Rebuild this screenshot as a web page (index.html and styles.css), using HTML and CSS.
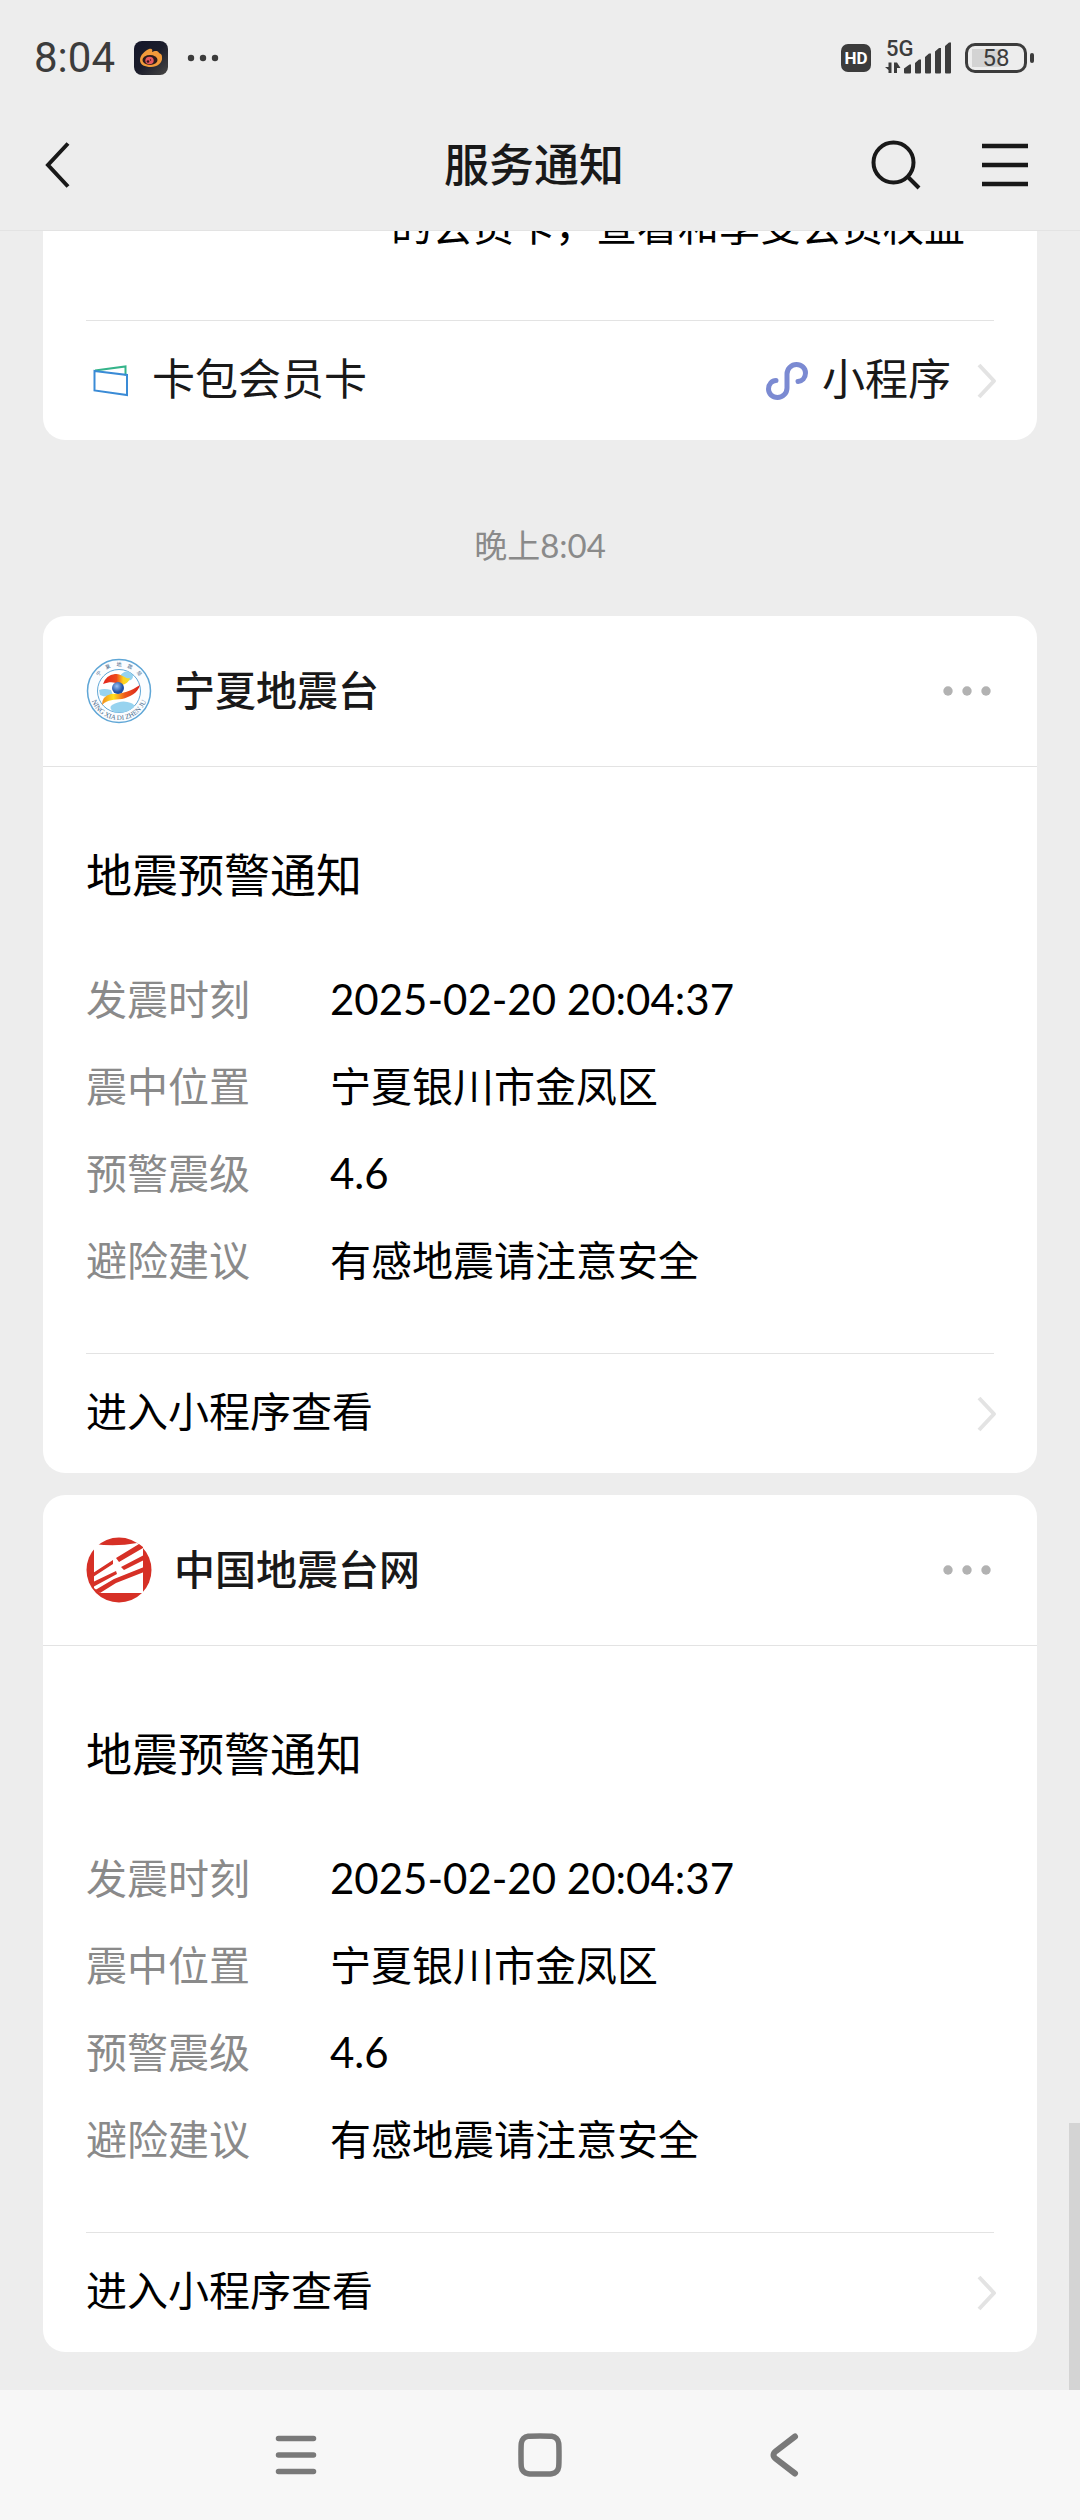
FILE: index.html
```html
<!DOCTYPE html>
<html lang="zh-CN">
<head>
<meta charset="utf-8">
<meta name="viewport" content="width=device-width, initial-scale=1">
<title>服务通知</title>
<link rel="stylesheet" href="styles.css">
</head>
<body>
<header class="top">
  <div class="status">
    <div class="status-left">
      <span class="clock">8:04</span>
      <svg class="app-icon" viewBox="0 0 34 34" width="34" height="34" aria-hidden="true">
        <defs>
          <linearGradient id="app-bg" x1="0" y1="0" x2="1" y2="1"><stop offset="0" stop-color="#14162a"/><stop offset=".5" stop-color="#1b1d2b"/><stop offset="1" stop-color="#484745"/></linearGradient>
        </defs>
        <rect width="34" height="34" rx="8" fill="url(#app-bg)"/>
        <path d="M6 19c0-5 5-9 9-11 3-1 4 1 3 3 2-1 6-2 7 1 3 1 3 3 3 4 1 6-5 10-11 10S6 24 6 19z" fill="#f19a3a"/>
        <ellipse cx="16" cy="19" rx="7.500" ry="5" fill="#2c1a1c"/>
        <ellipse cx="15.500" cy="19.500" rx="4.200" ry="3.800" fill="#e4575f"/>
        <circle cx="14" cy="20.500" r="1.300" fill="#3a1518"/>
        <circle cx="16.500" cy="19" r=".7" fill="#3a1518"/>
      </svg>
      <svg viewBox="0 0 32 8" width="32" height="8" fill="#3c3c3c" aria-hidden="true"><circle cx="4" cy="4" r="3.200"/><circle cx="16" cy="4" r="3.200"/><circle cx="28" cy="4" r="3.200"/></svg>
    </div>
    <div class="status-right">
      <span class="hd">HD</span>
      <span class="network">
        <span class="network-type">5G</span>
        <svg viewBox="0 0 66 32" width="66" height="32" fill="#3c3c3c" aria-hidden="true">
          <path d="M3.500 20.500h3V31h-3v-3L0 25h3.500zM9 20.500h3l3.500 5.500H12v5H9z"/>
          <path d="M19 30.500v-4l5.500-4H26v8q0 1-1 1h-5q-1 0-1-1zM30 30.500V21l4-3.500h2v13q0 1-1 1h-4q-1 0-1-1zM40 30.500V15l4-3.500h2v19q0 1-1 1h-4q-1 0-1-1zM50 30.500V9.500L54 6h2v24.500q0 1-1 1h-4q-1 0-1-1zM60 30.500V4l4-3.500h2v30q0 1-1 1h-4q-1 0-1-1z"/>
        </svg>
      </span>
      <span class="battery"><span class="battery-body">58</span></span>
    </div>
  </div>
  <nav class="bar">
    <button class="icon-button" type="button" aria-label="返回">
      <svg viewBox="0 0 26 48" width="26" height="48" fill="none" stroke="#191919" stroke-width="4"><path d="M24 2.500 4 24l20 21.500"/></svg>
    </button>
    <h1 class="bar-title">服务通知</h1>
    <div class="bar-actions">
      <button class="icon-button" type="button" aria-label="搜索">
        <svg viewBox="0 0 50 50" width="50" height="50" fill="none" stroke="#191919" stroke-width="4"><circle cx="22.500" cy="22.500" r="20"/><path d="m36.500 36.500 11.500 11.500"/></svg>
      </button>
      <button class="icon-button" type="button" aria-label="菜单">
        <svg viewBox="0 0 46 44" width="46" height="44" fill="none" stroke="#191919" stroke-width="4.500"><path d="M0 3h46M0 22h46M0 41h46"/></svg>
      </button>
    </div>
  </nav>
</header>

<main class="chat">
  <article class="card card-clipped">
    <p class="card-tail">的会员卡，查看和享受会员权益</p>
    <a class="card-link card-link-large" href="#">
      <svg class="wallet" viewBox="0 0 36 32" width="36" height="32" fill="none" stroke-width="2" aria-hidden="true"><path d="M2 5.500 32.500 1.500v9" stroke="#35b48a"/><path d="M1.500 6 34 10v20L1.500 25.500z" stroke="#3a8bd6"/></svg>
      <span class="card-link-text">卡包会员卡</span>
      <svg viewBox="0 0 42 38" width="42" height="38" fill="none" stroke="#7b8ad2" stroke-width="5" stroke-linecap="round" aria-hidden="true"><path d="M10 18.500C6 18.500 2.500 22 2.500 27c0 5 4 8.500 9 8.500s9.500-4 9.500-9.500V12C21 6.500 25.500 2.500 30.500 2.500s9 3.500 9 8.500-3.500 8-7.500 8.500"/></svg>
      <span class="card-link-label">小程序</span>
      <svg class="chevron" viewBox="0 0 20 36" width="20" height="36" fill="none" stroke="#e3e3e3" stroke-width="4" stroke-linejoin="round" aria-hidden="true"><path d="m2 2 15 16L2 34"/></svg>
    </a>
  </article>

  <time class="stamp">晚上8:04</time>

  <article class="card">
    <header class="card-head">
      <svg viewBox="0 0 66 66" width="66" height="66" aria-hidden="true">
        <defs>
          <linearGradient id="flame-top"><stop offset="0" stop-color="#e2231c"/><stop offset=".5" stop-color="#ee4a1c"/><stop offset=".75" stop-color="#ffd21f"/><stop offset="1" stop-color="#f3e02c"/></linearGradient>
          <linearGradient id="flame-low"><stop offset="0" stop-color="#f08a1e"/><stop offset=".3" stop-color="#ffe11f"/><stop offset=".6" stop-color="#ee5a1c"/><stop offset="1" stop-color="#d91f1c"/></linearGradient>
          <radialGradient id="globe" cx=".4" cy=".35"><stop offset="0" stop-color="#9cc4f2"/><stop offset="1" stop-color="#1f50a6"/></radialGradient>
          <path id="ring-top" d="M8 33a25 25 0 0 1 50 0"/>
          <path id="ring-low" d="M4 33a29 29 0 0 0 58 0"/>
        </defs>
        <circle cx="33" cy="33" r="31.500" fill="#fbfdff" stroke="#5fa6d6" stroke-width="1.500"/>
        <circle cx="33" cy="33" r="21.500" fill="#fff" stroke="#5fa6d6"/>
        <path d="M34 18q4-6 9-4 7 3 2 8-6 2-11-1zM13 32q5-2 12 0l2 5q-6 3-13 0zM26 47q10-6 19-2 5 2 2 5-8 6-19 4-6-4-2-7z" fill="#97d3ef"/>
        <path d="M17 26q3-9 12-10c7-1 11 6 15 4-1 4-5 7-9 7-7-3-10-4-18-1z" fill="url(#flame-top)"/>
        <path d="M16 47q0-9 9-11c12 0 20-3 29-9-2 8-10 12-18 14-8 1-14 0-20 6z" fill="url(#flame-low)"/>
        <circle cx="32" cy="30" r="6" fill="url(#globe)"/>
        <text class="ring-text ring-text-cjk"><textPath href="#ring-top" startOffset="50%">宁&#160; &#160; &#160;夏&#160; &#160; &#160;地&#160; &#160; &#160;震&#160; &#160; &#160;局</textPath></text>
        <text class="ring-text"><textPath href="#ring-low" startOffset="50%">NING XIA DI ZHEN JU</textPath></text>
      </svg>
      <h2 class="card-name">宁夏地震台</h2>
      <button class="icon-button" type="button" aria-label="更多">
        <svg viewBox="0 0 48 10" width="48" height="10" fill="#b2b2b2"><circle cx="5" cy="5" r="4.700"/><circle cx="24" cy="5" r="4.700"/><circle cx="43" cy="5" r="4.700"/></svg>
      </button>
    </header>
    <div class="card-body">
      <h3 class="card-title">地震预警通知</h3>
      <dl class="facts">
        <dt>发震时刻</dt><dd class="figure">2025-02-20 20:04:37</dd>
        <dt>震中位置</dt><dd>宁夏银川市金凤区</dd>
        <dt>预警震级</dt><dd class="figure">4.6</dd>
        <dt>避险建议</dt><dd>有感地震请注意安全</dd>
      </dl>
    </div>
    <a class="card-link" href="#">
      <span class="card-link-text">进入小程序查看</span>
      <svg class="chevron" viewBox="0 0 20 36" width="20" height="36" fill="none" stroke="#e3e3e3" stroke-width="4" stroke-linejoin="round" aria-hidden="true"><path d="m2 2 15 16L2 34"/></svg>
    </a>
  </article>

  <article class="card">
    <header class="card-head">
      <svg viewBox="0 0 66 66" width="66" height="66" aria-hidden="true">
        <circle cx="33" cy="33" r="32.500" fill="#d63026"/>
        <path d="M8 7q22 3 43-1l6 5v45H14l-6-5z" fill="#fff"/>
        <path d="M7 36 27 23v4L7 40zM30 21 53 7l4 3v1L33 25zM7 45 30 34l1 3L7 50zM35 30 58 18v5L38 33zM11 52 28 42 58 30v5L30 46 14 56l-5-3z" fill="#d63026"/>
      </svg>
      <h2 class="card-name">中国地震台网</h2>
      <button class="icon-button" type="button" aria-label="更多">
        <svg viewBox="0 0 48 10" width="48" height="10" fill="#b2b2b2"><circle cx="5" cy="5" r="4.700"/><circle cx="24" cy="5" r="4.700"/><circle cx="43" cy="5" r="4.700"/></svg>
      </button>
    </header>
    <div class="card-body">
      <h3 class="card-title">地震预警通知</h3>
      <dl class="facts">
        <dt>发震时刻</dt><dd class="figure">2025-02-20 20:04:37</dd>
        <dt>震中位置</dt><dd>宁夏银川市金凤区</dd>
        <dt>预警震级</dt><dd class="figure">4.6</dd>
        <dt>避险建议</dt><dd>有感地震请注意安全</dd>
      </dl>
    </div>
    <a class="card-link" href="#">
      <span class="card-link-text">进入小程序查看</span>
      <svg class="chevron" viewBox="0 0 20 36" width="20" height="36" fill="none" stroke="#e3e3e3" stroke-width="4" stroke-linejoin="round" aria-hidden="true"><path d="m2 2 15 16L2 34"/></svg>
    </a>
  </article>
  <div class="scroll-thumb"></div>
</main>

<nav class="system-nav">
  <button class="icon-button" type="button" aria-label="最近任务">
    <svg viewBox="0 0 44 44" width="44" height="44" fill="none" stroke="#797979" stroke-width="5.500" stroke-linecap="round"><path d="M4.500 5.500h35M4.500 22h35M4.500 38.500h35"/></svg>
  </button>
  <button class="icon-button" type="button" aria-label="主屏幕">
    <svg viewBox="0 0 44 44" width="44" height="44" fill="none" stroke="#797979" stroke-width="5.500"><path d="M22 3C34 3 36 3 38.500 5.500S41 10 41 22s0 14-2.500 16.500S34 41 22 41 8 41 5.500 38.500 3 34 3 22s0-14 2.500-16.500S10 3 22 3z"/></svg>
  </button>
  <button class="icon-button" type="button" aria-label="返回上一级">
    <svg viewBox="0 0 44 44" width="44" height="44" fill="none" stroke="#797979" stroke-width="6" stroke-linecap="round"><path d="M33 3.500 14 18q-5 4 0 8l19 14.500"/></svg>
  </button>
</nav>
</body>
</html>
```
FILE: styles.css
```css
* {
  box-sizing: border-box;
}

body {
  margin: 0;
  min-height: 100vh;
  display: flex;
  flex-direction: column;
  background: #ededed;
  color: #000;
  font-family: Lato, "Noto Sans CJK SC", sans-serif;
  font-size: 41px;
}

h1, h2, h3, p, dl, dd {
  margin: 0;
  font-weight: 400;
}

svg {
  display: block;
  flex: none;
}

a {
  color: inherit;
  text-decoration: none;
}

.icon-button {
  display: block;
  padding: 0;
  border: 0;
  background: none;
}

/* status bar and title bar */

.top {
  padding-bottom: 16px;
}

.status {
  display: flex;
  align-items: center;
  justify-content: space-between;
  height: 116px;
  padding: 0 46px 0 34px;
  color: #3c3c3c;
  font-family: Roboto, sans-serif;
}

.status-left {
  display: flex;
  align-items: center;
  gap: 19px;
}

.clock {
  font-size: 42px;
  line-height: 48px;
}

.status-right {
  display: flex;
  align-items: center;
  gap: 14px;
}

.hd {
  width: 30px;
  border-radius: 7px;
  background: #3c3c3c;
  color: #fff;
  font-size: 17px;
  font-weight: 700;
  line-height: 28px;
  text-align: center;
}

.network {
  position: relative;
}

.network-type {
  position: absolute;
  top: -4px;
  left: 1px;
  font-size: 22px;
  font-weight: 500;
  line-height: 22px;
}

.battery {
  display: flex;
  align-items: center;
  gap: 3px;
}

.battery::after {
  width: 4px;
  height: 10px;
  border-radius: 2px;
  background: #3c3c3c;
  content: "";
}

.battery-body {
  width: 62px;
  border: 3px solid #3c3c3c;
  border-radius: 10px;
  background: linear-gradient(90deg, #d3d3d3 58%, transparent 58%) no-repeat 4px 3px / 50px 18px;
  font-size: 24px;
  line-height: 24px;
  text-align: center;
}

.bar {
  display: grid;
  grid-template-columns: 1fr auto 1fr;
  align-items: center;
  height: 98px;
  padding: 0 52px 0 44px;
}

.bar-title {
  padding-right: 4px;
  color: #191919;
  font-size: 45px;
  font-weight: 500;
  line-height: 60px;
}

.bar-actions {
  display: flex;
  align-items: center;
  justify-content: flex-end;
  gap: 61px;
}

/* message list */

.chat {
  position: relative;
  flex: 1;
  display: flex;
  flex-direction: column;
  padding: 0 43px 38px;
  border-top: 1px solid #e3e3e3;
}

.card {
  border-radius: 22px;
  background: #fff;
}

.card + .card {
  margin-top: 22px;
}

.card-clipped {
  border-radius: 0 0 22px 22px;
  overflow: hidden;
}

.card-tail {
  margin-top: -35px;
  padding: 0 43px 64px 348px;
  line-height: 60px;
}

.card-head {
  display: flex;
  align-items: center;
  gap: 22px;
  height: 151px;
  padding: 0 46px 0 43px;
  border-bottom: 1px solid #e3e3e3;
}

.card-name {
  flex: 1;
  color: #191919;
  font-size: 41px;
  font-weight: 500;
  line-height: 60px;
}

.card-body {
  padding: 78px 43px 49px;
}

.card-title {
  font-size: 46px;
  line-height: 60px;
}

.facts {
  display: grid;
  grid-template-columns: 244px 1fr;
  margin-top: 51px;
  line-height: 87px;
}

.facts dt {
  color: #8a8a8a;
}

.facts .figure {
  font-size: 42px;
}

.card-link {
  display: flex;
  align-items: center;
  height: 120px;
  margin: 0 43px;
  border-top: 1px solid #e3e3e3;
  line-height: 60px;
}

.card-link-text {
  flex: 1;
}

.card-link-large {
  gap: 14px;
  color: #191919;
  font-size: 43px;
}

.card-link-text,
.card-link-label {
  padding-bottom: 4px;
}

.wallet {
  margin: 0 9px 0 7px;
}

.chevron {
  margin: 0 -3px 0 12px;
}

.stamp {
  margin: 75px 0 41px;
  color: #8a8a8a;
  font-size: 33px;
  line-height: 60px;
  text-align: center;
}

.scroll-thumb {
  position: absolute;
  right: 0;
  bottom: 0;
  width: 11px;
  height: 267px;
  background: #d4d4d4;
}

.ring-text {
  fill: #4a6a8c;
  font-family: "Liberation Serif", serif;
  font-size: 7px;
  text-anchor: middle;
}

.ring-text-cjk {
  font-family: "Noto Sans CJK SC", sans-serif;
  font-size: 5px;
}

/* system navigation */

.system-nav {
  display: flex;
  align-items: center;
  justify-content: center;
  gap: 200px;
  height: 130px;
  background: #f7f7f7;
}
```
